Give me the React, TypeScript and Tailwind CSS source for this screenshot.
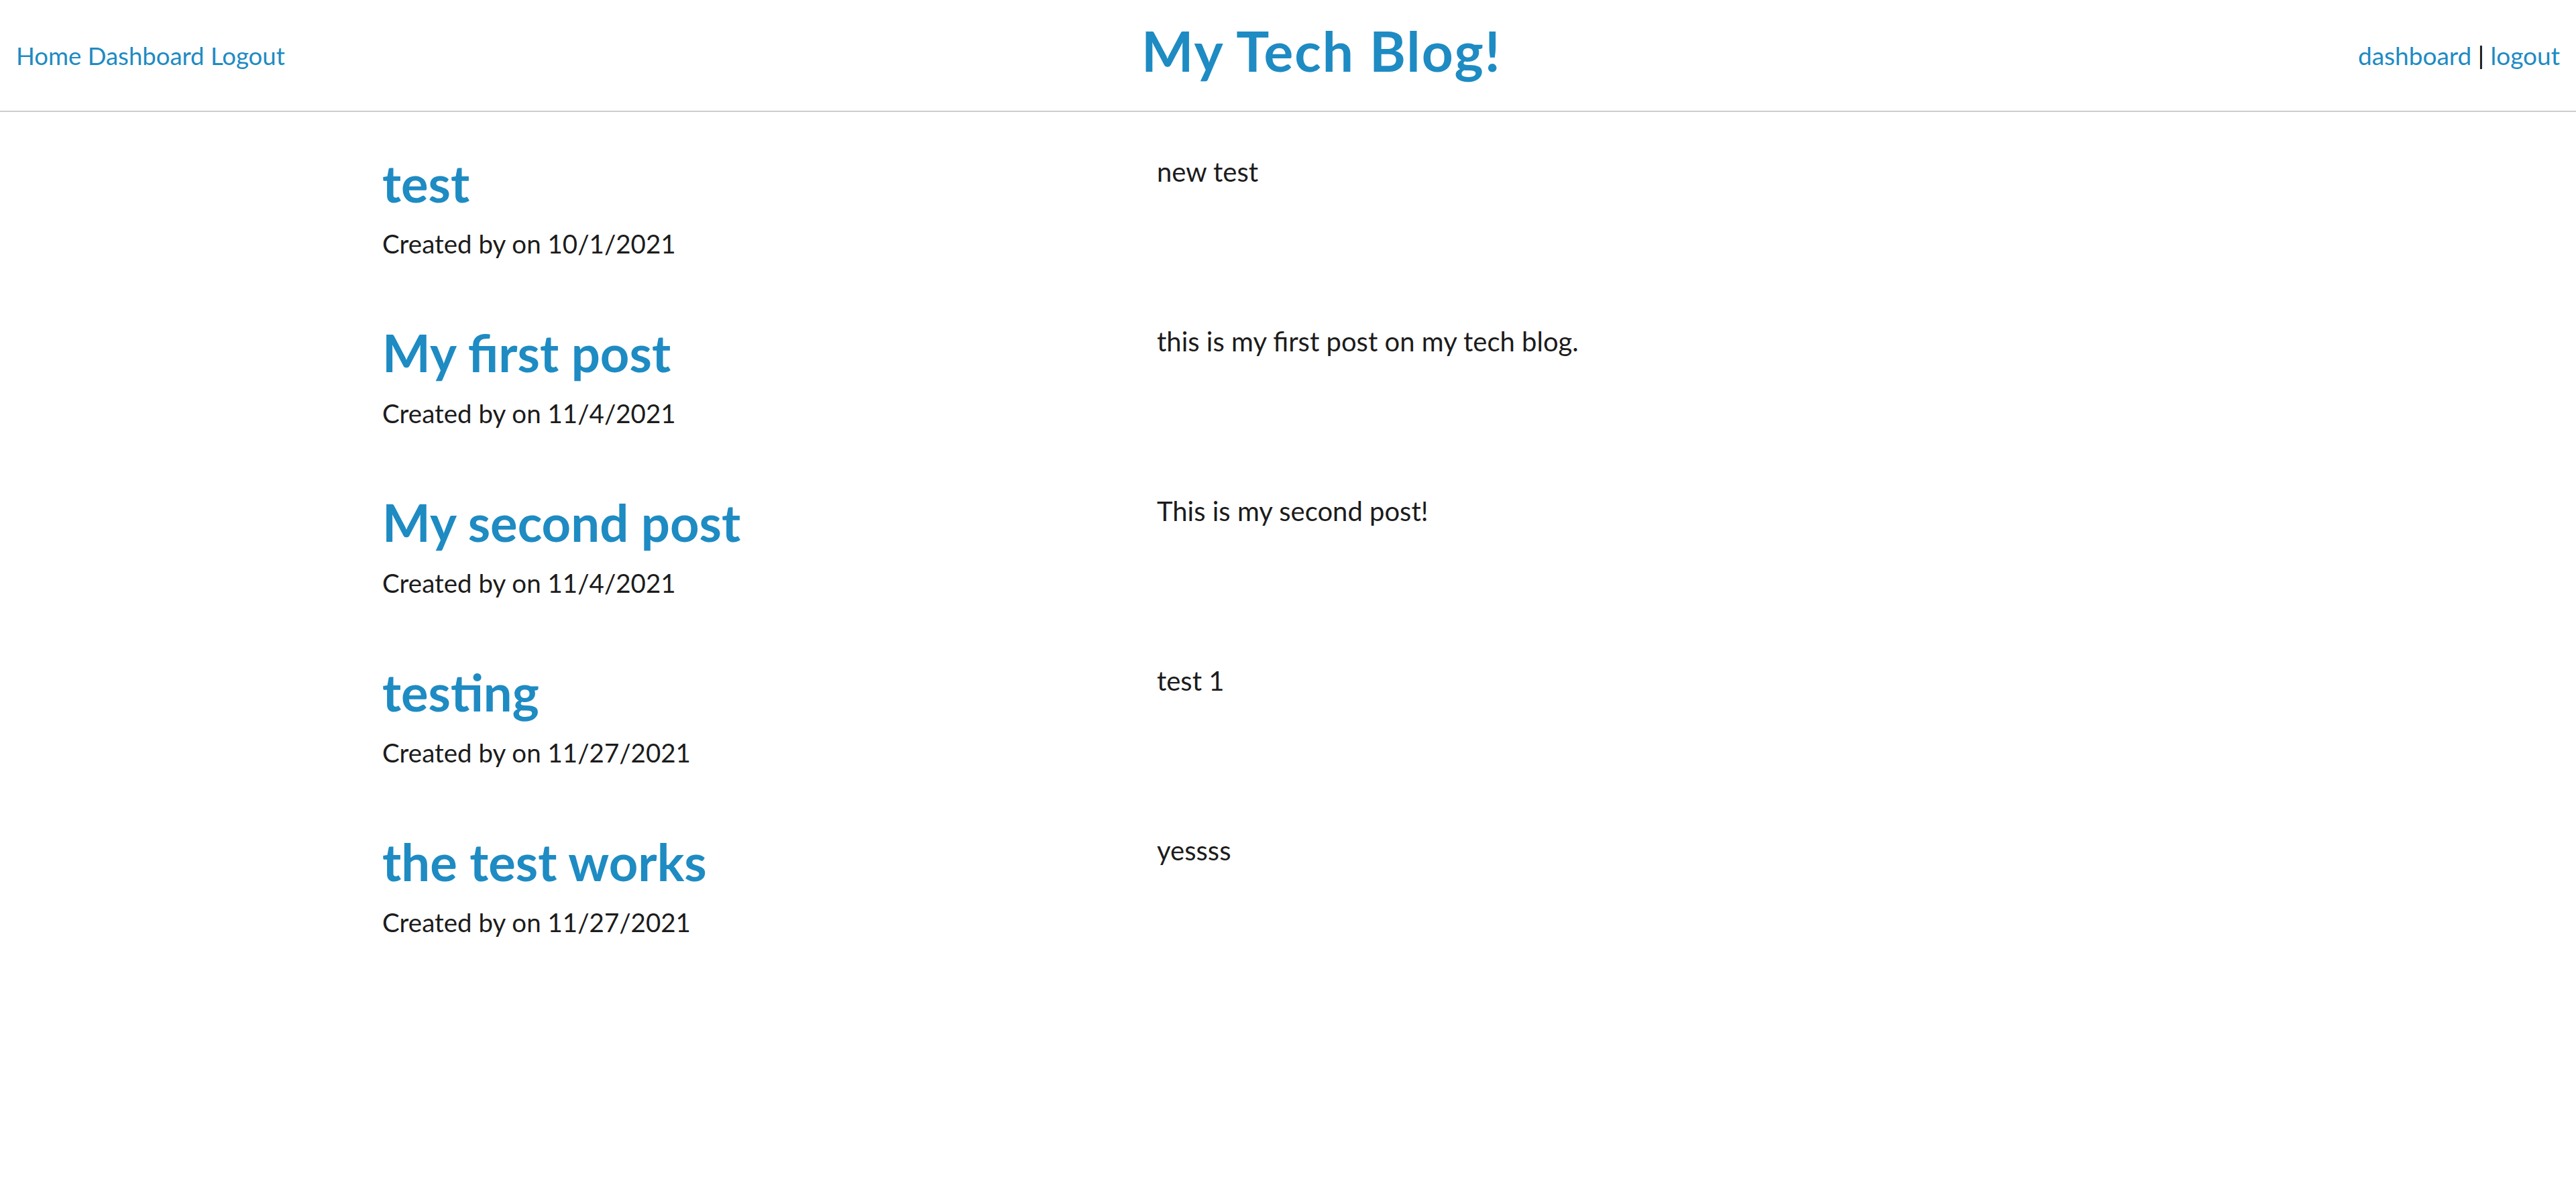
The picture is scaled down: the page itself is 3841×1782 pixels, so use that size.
import React from "react";

type Post = {
	title: string;
	date: string;
	body: string;
};

const posts: Post[] = [
	{ title: "test", date: "10/1/2021", body: "new test" },
	{ title: "My first post", date: "11/4/2021", body: "this is my first post on my tech blog." },
	{ title: "My second post", date: "11/4/2021", body: "This is my second post!" },
	{ title: "testing", date: "11/27/2021", body: "test 1" },
	{ title: "the test works", date: "11/27/2021", body: "yessss" },
];

const App = () => {
	return (
		<div className="min-h-screen bg-white text-[#1c1c1c] font-['Lato',sans-serif]">
			<header className="flex justify-between items-start h-[167px] px-6 border-b-2 border-[#cccccc]">
				<nav className="mt-[59px] text-[36.5px] leading-[48px] text-[#1e8bc3]">
					<a href="#">Home</a> <a href="#">Dashboard</a> <a href="#">Logout</a>
				</nav>
				<h1 className="mt-[27px] text-[82px] leading-[96px] tracking-[2px] font-bold text-[#1e8bc3]">
					My Tech Blog!
				</h1>
				<div className="mt-[59px] text-[37px] leading-[48px] text-black">
					<a href="#" className="text-[#1e8bc3]">dashboard</a> | <a href="#" className="text-[#1e8bc3]">logout</a>
				</div>
			</header>
			<main className="pl-[570px] pt-[62px] flex flex-col gap-[95px]">
				{posts.map((post, i) => (
					<div key={i} className="flex">
						<div className="w-[1155px]">
							<h2 className="text-[76px] leading-[88px] font-bold text-[#1e8bc3]">
								{post.title}
							</h2>
							<p className="mt-[22px] text-[38.5px] leading-[48px]">
								Created by on {post.date}
							</p>
						</div>
						<p className="mt-[3px] text-[40px] leading-[48px]">{post.body}</p>
					</div>
				))}
			</main>
		</div>
	);
};

export default App;
